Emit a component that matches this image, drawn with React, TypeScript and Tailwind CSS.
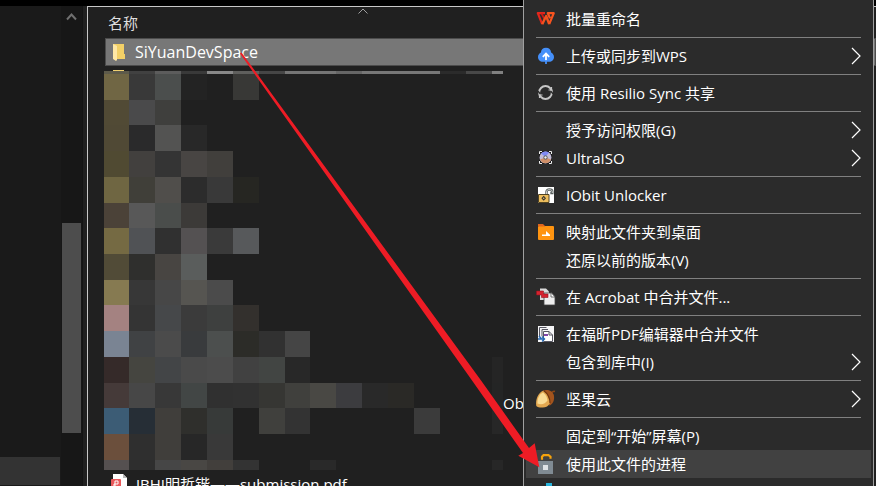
import React from "react";

interface MenuEntry {
    label: string;
    icon?: React.ReactNode;
    submenu?: boolean;
    active?: boolean;
}

// 马赛克的列、行边界
const COLS = [0, 25, 51, 77, 103, 129, 155, 181, 206, 232, 258, 284, 310, 336, 362, 388, 399];
const ROWS = [1, 4, 30, 55, 81, 107, 133, 158, 184, 210, 235, 261, 287, 313, 338, 364, 390, 400];

const MOSAIC: string[][] = [
    ["#5d5a4a", "#414141", "#5c5c5c", "#393939", "#888888", "#5f5f5d", "#464646", "#757575", "#757575", "#666666", "#777777", "#777777", "#777777", "#2b2b2b", "#484848", "#808080"],
    ["#706644", "#393939", "#4b4e4d", "#232323", "", "#383836"],
    ["#514a35", "#4a4a4b", "#3f3f3d"],
    ["#504935", "#2a2a2b", "#535352", "#282828"],
    ["#504a32", "#42403e", "#343434", "#484543", "#413f3c"],
    ["#6f6642", "#403f39", "#504e4b", "#2c2c2c", "#393939", "#262622"],
    ["#4b4238", "#585858", "#4a4d4b", "#3c3a38"],
    ["#756a43", "#505255", "#303030", "#545152", "#3a3a3a", "#57595b"],
    ["#514b37", "#2f2f2d", "#484542", "#5a5d5c"],
    ["#867a51", "#373737", "#474747", "#565551", "#4b4b4b"],
    ["#a48281", "#343434", "#46484a", "#3b3b3b", "#3e403f", "#33302d"],
    ["#7a8493", "#404244", "#4b4b4b", "#393b3d", "#4c4f4e", "#2c2c28", "#313131", "#454545"],
    ["#352a29", "#454540", "#434547", "#4a4a4a", "#4c4c4c", "#414141", "#424543", "#282828", "", "", "", "", "", "", "", "#252525"],
    ["#453a39", "#474747", "#383838", "#424645", "#303030", "#313131", "#363633", "#40403d", "#494844", "#3c3c3f", "#292929", "#2a2926", "", "", "", "#242525"],
    ["#3c5c75", "#262e36", "#403e3b", "#2f2f2c", "#373a39", "", "#40403d", "#333333", "", "", "", "", "#3b3b3b", "", "", "#272727"],
    ["#6b4f3c", "#2f2f2f", "#403e3b", "#272727", "#393939"],
    ["#555050", "#2e2e2e", "#464646", "#494744", "#423f3c", "#333333", "", "", "#292929", "", "", "", "", "", "", "#272727"],
];

const Mosaic = () => (
    <svg width="399" height="400" className="shrink-0" shapeRendering="crispEdges" aria-hidden="true">
        <rect x="9" y="0" width="11" height="1" fill="#f0d070" />
        {MOSAIC.map((row, r) =>
            row.map((color, c) =>
                color ? (
                    <rect
                        key={`${r}-${c}`}
                        x={COLS[c]}
                        y={ROWS[r]}
                        width={COLS[c + 1] - COLS[c]}
                        height={ROWS[r + 1] - ROWS[r]}
                        fill={color}
                    />
                ) : null
            )
        )}
    </svg>
);

const Icon: React.FC<{ children: React.ReactNode }> = ({ children }) => (
    <svg width="20" height="20" viewBox="0 0 20 20" fill="none" className="overflow-visible" aria-hidden="true">
        {children}
    </svg>
);

const WpsIcon = () => (
    <Icon>
        <path d="M9 4.200H1.800L6.200 15.200" stroke="#e3261c" strokeWidth="2.200" strokeLinejoin="round" />
        <path d="M5.500 4.500l2.700 5" stroke="#c91c17" strokeWidth="1.800" />
        <path d="M6.200 15.200L10.200 7l3 8.200" stroke="#f4511e" strokeWidth="2.400" strokeLinejoin="round" />
        <path d="M13.200 15.200l4.600-11h-6l2.200 5" stroke="#f8541f" strokeWidth="2.200" strokeLinejoin="round" />
    </Icon>
);

const CloudIcon = () => (
    <Icon>
        <path d="M10 1.800c3 0 4.900 2 5.100 4.600 1.800.9 2.900 2.600 2.900 4.500 0 2.900-2.200 4.800-4.800 4.800H6.800C4.200 15.700 2 13.800 2 10.900c0-1.900 1.100-3.600 2.900-4.500C5.100 3.800 7 1.800 10 1.800z" fill="#4590fa" />
        <path d="M10 15V8M6.800 10.800L10 7.600l3.200 3.200" stroke="#fff" strokeWidth="1.800" />
        <path d="M10 14v4" stroke="#4590fa" strokeWidth="1.800" />
    </Icon>
);

const SyncIcon = () => (
    <Icon>
        <circle cx="9.500" cy="9.500" r="6.400" stroke="#c6c6c6" strokeWidth="2" />
        <path d="M1.800 8l2.600 3M17.200 11l-2.600-3" stroke="#2b2b2b" strokeWidth="1.400" />
        <path d="M12.500 7h3.800M15.500 4v3.500M6.500 12H2.700M3.500 15v-3.500" stroke="#c6c6c6" strokeWidth="1.200" />
    </Icon>
);

const UltraIsoIcon = () => (
    <Icon>
        <path d="M3 3h13v13H3z" fill="#171717" />
        <circle cx="9.500" cy="9.500" r="6" fill="#c3bcd6" />
        <path d="M5 5.500a6 6 0 0 1 8-1l-3.500 4.500z" fill="#7f8af4" />
        <path d="M4 11.500a6 6 0 0 0 11 0l-5.500-2z" fill="#cf8f68" />
        <circle cx="9.500" cy="9.500" r="1.700" fill="#eee" stroke="#555" />
        <path d="M3.500 6V3.500H6M13 3.500h2.500V6M3.500 13v2.500H6M13 15.500h2.500V13" stroke="#eee" />
    </Icon>
);

const UnlockerIcon = () => (
    <Icon>
        <path d="M2 2h16v16H2z" fill="#fff" />
        <path d="M10.500 9V6.800c0-3 5.800-3 5.800 0V8h-2" stroke="#59605f" strokeWidth="2.400" />
        <path d="M10.500 9V6.800c0-3 5.800-3 5.800 0V8" stroke="#e8e8e8" strokeWidth=".8" />
        <path d="M2.500 9.500h10.500v8H2.500z" fill="#edbd5c" stroke="#514321" />
        <path d="M7.700 10.800l2.300 2.500-2.300 2.500-2.300-2.500z" fill="#303030" />
        <circle cx="7.700" cy="13.300" r=".8" fill="#edbd5c" />
    </Icon>
);

const MapFolderIcon = () => (
    <Icon>
        <rect x="2" y="4" width="16" height="14" rx="1" fill="#ff9410" />
        <path d="M2 2h5l2.500 2.500H2z" fill="#df651c" />
        <path d="M6 14v-1.500h4V9l4 3.800V14z" fill="#fff" />
    </Icon>
);

const AcrobatIcon = () => (
    <Icon>
        <path d="M4 1.500h6l3 3V13H4z" fill="#dadada" />
        <path d="M8 6h7.500L19 9.500V18H8z" fill="#eeeeee" stroke="#444" strokeWidth=".8" />
        <path d="M15 5.500V10h4z" fill="#fff" stroke="#444" strokeWidth=".7" />
        <path d="M.5 4h7v3h4.500v3.500H5.500V8h-5z" fill="#d5232f" stroke="#97131d" strokeWidth=".6" />
    </Icon>
);

const FoxitIcon = () => (
    <Icon>
        <path d="M2 2h16v16H2z" fill="#f4f4f6" />
        <path d="M3.500 12V3.500h7M6 12V5.500h6" stroke="#565661" />
        <path d="M7.500 17.500v-10h5.500l3.500 3.500v6.500z" fill="#fff" stroke="#565661" />
        <path d="M13 7.500V11h3.500" stroke="#565661" />
        <path d="M8 10h4v2H8z" fill="#8147a9" />
        <path d="M2 15h6M6 12.500l2.500 2.500L6 17.500M3 12l2.500 3" stroke="#2467b2" strokeWidth="1.400" />
    </Icon>
);

const NutIcon = () => (
    <Icon>
        <path d="M15.500 4.500c.5-1.800 2-2.500 3.500-2" stroke="#8b4717" strokeWidth="1.600" />
        <path d="M7 2c3.500-2.500 9.500-.5 10.800 4 .9 4.500-.3 8.500-4.300 10.800z" fill="#a3541d" />
        <path d="M.3 17C-.8 10.500 2 4 7.500 1.500c4 3 6.500 7 6.500 12.500-1.500 3.500-5 5-8.500 4.500-2 0-4-.5-5.200-1.500z" fill="#e3a850" />
        <path d="M1.500 14.500C1.200 9.500 3.200 5.500 7 3.500c2.700 2.200 4.200 4.800 4.500 8-2.300 3.500-6 4.500-10 3z" fill="#fadc94" />
        <path d="M7.500 1.500c4 3 6.500 7 6.500 12.500" stroke="#6f3510" strokeWidth="1.200" />
    </Icon>
);

const LockIcon = () => (
    <Icon>
        <path d="M6 5.500V2.500L7.500 1h5L14.500 2.500v2" stroke="#f7a30c" strokeWidth="2.200" transform="translate(0 .2)" />
        <path d="M2 7h15v13H2z" fill="#808b93" />
        <path d="M7 11h5v5H7z" fill="#dfe3e6" />
    </Icon>
);

const CyanIcon = () => (
    <Icon>
        <path d="M10 1h6v9h-6z" fill="#27b4dc" />
    </Icon>
);

const GROUPS: MenuEntry[][] = [
    [{ label: "批量重命名", icon: <WpsIcon /> }],
    [{ label: "上传或同步到WPS", icon: <CloudIcon />, submenu: true }],
    [{ label: "使用 Resilio Sync 共享", icon: <SyncIcon /> }],
    [
        { label: "授予访问权限(G)", submenu: true },
        { label: "UltraISO", icon: <UltraIsoIcon />, submenu: true },
    ],
    [{ label: "IObit Unlocker", icon: <UnlockerIcon /> }],
    [
        { label: "映射此文件夹到桌面", icon: <MapFolderIcon /> },
        { label: "还原以前的版本(V)" },
    ],
    [{ label: "在 Acrobat 中合并文件...", icon: <AcrobatIcon /> }],
    [
        { label: "在福昕PDF编辑器中合并文件", icon: <FoxitIcon /> },
        { label: "包含到库中(I)", submenu: true },
    ],
    [{ label: "坚果云", icon: <NutIcon />, submenu: true }],
    [
        { label: "固定到“开始”屏幕(P)" },
        { label: "使用此文件的进程", icon: <LockIcon />, active: true },
        { label: "", icon: <CyanIcon /> },
    ],
];

const MenuItem: React.FC<MenuEntry> = ({ label, icon, submenu, active }) => (
    <button
        type="button"
        role="menuitem"
        className={`flex h-7 w-full items-center gap-2.5 px-2.5 text-left ${active ? "bg-[#414141]" : ""}`}
    >
        <span className="size-5 shrink-0">{icon}</span>
        <span className="flex-1 whitespace-nowrap">{label}</span>
        {submenu && (
            <svg width="10" height="18" viewBox="0 0 10 18" fill="none" stroke="#fff" aria-hidden="true">
                <path d="M1 1l8 8-8 8" strokeWidth="1.200" />
            </svg>
        )}
    </button>
);

const ContextMenu = () => (
    <div
        role="menu"
        className="absolute top-0 right-0.5 w-[351px] border-x border-[#a0a0a0] bg-[#2b2b2b] px-0.5 pt-[5px] text-white"
    >
        {GROUPS.map((group, i) => (
            <div key={i}>
                {i > 0 && <hr className="mx-2.5 my-1 border-[#808080]" />}
                {group.map((entry) => (
                    <MenuItem key={entry.label} {...entry} />
                ))}
            </div>
        ))}
    </div>
);

const Sidebar = () => (
    <aside className="flex w-[87px] shrink-0 bg-[#202020]">
        <div className="flex flex-1 flex-col justify-end bg-[#1a1a1a] pr-px pb-px">
            <div className="h-7 bg-[#333333]" />
        </div>
        <div className="flex w-[21px] flex-col items-center bg-[#171717] pt-1.5">
            <svg width="11" height="9" viewBox="0 0 11 9" fill="none" aria-hidden="true">
                <path d="M1 7.500l4.500-5 4.500 5" stroke="#707070" strokeWidth="2" />
            </svg>
            <div className="mt-[202px] h-[210px] w-[19px] bg-[#4d4d4d]" />
        </div>
        <div className="w-[5px] border-l border-[#141414]" />
    </aside>
);

const FileList = () => (
    <main className="min-w-0 flex-1 overflow-hidden border-t border-l border-[#c8c8c8] bg-[#202020] pl-4">
        <div className="flex h-[31px] items-center pl-1 text-[#dedede]">
            名称
            <svg width="10" height="6" viewBox="0 0 10 6" fill="none" className="mb-6 ml-[220px]" aria-hidden="true">
                <path d="M.5 5.500L5 1l4.500 4.500" stroke="#a0a0a0" />
            </svg>
        </div>
        <div className="ml-px flex h-7 items-center gap-2 border border-[#4c4c4c] bg-[#777777] pl-1.5 text-white">
            <svg width="14" height="18" viewBox="0 0 14 18" className="mr-px" aria-hidden="true">
                <path d="M1 1h11v10h1v5H3z" fill="#f3d067" />
                <path d="M1 1l4 2v14l-1 1-3-2z" fill="#ffe8a6" />
            </svg>
            <span className="text-base">SiYuanDevSpace</span>
        </div>
        <div className="mt-1 flex text-white">
            <Mosaic />
            <span className="mt-[323px]">Ob</span>
        </div>
        <div className="flex h-7 items-center gap-2 pl-1.5 text-white">
            <svg width="18" height="20" viewBox="0 0 18 20" aria-hidden="true">
                <path d="M3 0h10l4 4v16H3z" fill="#fff" />
                <path d="M13 0v4h4z" fill="#b8b8b8" />
                <rect x="1" y="5" width="10" height="11" rx="1" fill="#e9595b" />
                <path d="M4 14v-4h4V7H5v6h3" stroke="#fff" fill="none" />
            </svg>
            <span className="whitespace-nowrap">JBHI明哲锴——submission.pdf</span>
        </div>
    </main>
);

const App = () => {
    return (
        <div className="relative flex h-screen overflow-hidden bg-black pt-1.5 font-['Open_Sans','Noto_Sans_CJK_SC',sans-serif] text-[15px] leading-5">
            <Sidebar />
            <FileList />
            <ContextMenu />
            {/* 从文件夹指向菜单项的箭头 */}
            <svg
                width="302"
                height="416"
                viewBox="240 52 302 416"
                className="pointer-events-none absolute top-[52px] left-[240px]"
                aria-hidden="true"
            >
                <path d="M240 53.500l1.500-1L480.700 380l48.300 68 5.700-4.700 4.600 24-21-11.600 4.700-2.700-51.300-73z" fill="#ee1c25" />
            </svg>
        </div>
    );
};

export default App;
